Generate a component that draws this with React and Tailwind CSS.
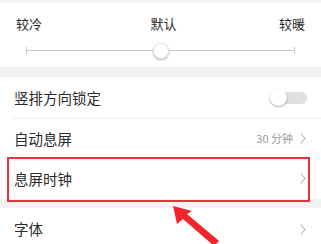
function Chevron() {
  return (
    <svg width="6" height="11" viewBox="0 0 6 11" className="shrink-0">
      <path d="M1 1 L5 5.5 L1 10" fill="none" stroke="#b0b0b0" strokeWidth="1.1" strokeLinecap="round" strokeLinejoin="round" />
    </svg>
  )
}

export default function App() {
  const font = { fontFamily: '"Noto Sans CJK SC", "Noto Sans", sans-serif' }
  return (
    <div className="relative w-[321px] h-[244px] overflow-hidden bg-[#f2f2f2] text-[#2b2b2b]" style={font}>
      <div className="h-[3px]" />
      {/* Colour temperature */}
      <div className="bg-white h-[64px] px-[16px] pt-[12px]">
        <div className="flex justify-between text-[13px] leading-[18px]">
          <span>较冷</span>
          <span className="ml-[6px]">默认</span>
          <span>较暖</span>
        </div>
        <div className="relative mx-[10px] mt-[10px] h-[16px]">
          <div className="absolute left-0 right-0 top-[7px] h-px bg-[#c8c8c8]" />
          <div className="absolute left-0 top-[4px] w-px h-[7px] bg-[#c8c8c8]" />
          <div className="absolute right-0 top-[4px] w-px h-[7px] bg-[#c8c8c8]" />
          <div className="absolute left-[127px] top-0 w-[16px] h-[16px] rounded-full bg-white border border-[#e6e6e6] shadow-[0_1px_2px_rgba(0,0,0,0.3)]" />
        </div>
      </div>
      <div className="h-[10px]" />
      {/* Rows */}
      <div className="bg-white">
        <div className="h-[41px] flex items-center justify-between pl-[14px] pr-[14px]">
          <span className="text-[14.5px]">竖排方向锁定</span>
          <div className="relative w-[37px] h-[17px] flex items-center">
            <div className="absolute left-[4px] right-0 h-[12px] rounded-full bg-[#e0e0e0]" />
            <div className="relative w-[17px] h-[17px] rounded-full bg-white shadow-[0_1px_2px_rgba(0,0,0,0.35)]" />
          </div>
        </div>
        <div className="ml-[12px] h-px bg-[#eeeeee]" />
        <div className="h-[39px] flex items-center justify-between pl-[14px] pr-[15px]">
          <span className="text-[14.5px]">自动息屏</span>
          <span className="text-[11px] text-[#999] flex items-center gap-[7px]">
            30 分钟
            <Chevron />
          </span>
        </div>
        <div className="h-[41px] flex items-center justify-between pl-[14px] pr-[15px]">
          <span className="text-[14.5px]">息屏时钟</span>
          <Chevron />
        </div>
      </div>
      <div className="h-[9px]" />
      <div className="bg-white h-[42px] flex items-center justify-between pl-[14px] pr-[15px]">
        <span className="text-[14.5px]">字体</span>
        <Chevron />
      </div>

      {/* Annotation */}
      <div className="absolute left-[7px] top-[157px] w-[303px] h-[45px] border-2 border-[#e8323a]" />
      <svg className="absolute left-0 top-0" width="321" height="244" viewBox="0 0 321 244">
        <polygon points="173,206 177,224 183,219 214,246 219,241 187,214 192,211" fill="#f0262c" />
      </svg>
    </div>
  )
}
